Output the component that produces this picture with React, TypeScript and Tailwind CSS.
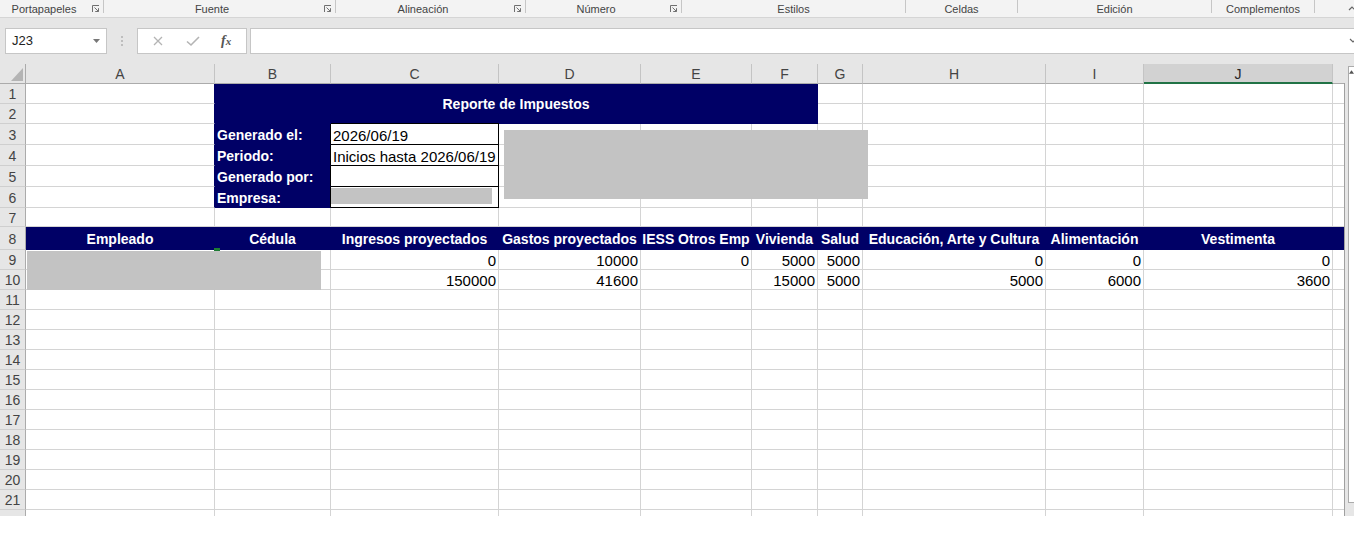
import React from "react";

const base = "border-r border-b border-[#d4d4d4] flex items-center pt-[2px] whitespace-nowrap leading-[17px]";
const kCell = "border-b border-[#d4d4d4]";

function Launcher() {
  return (
    <svg width="8" height="8" viewBox="0 0 8 8" className="shrink-0">
      <path d="M0.5 7V0.5H7" fill="none" stroke="#707070" strokeWidth="1" />
      <path d="M2.5 2.5L6.5 6.5M3.2 6.5H6.5V3.2" fill="none" stroke="#707070" strokeWidth="1" />
    </svg>
  );
}

function Group({ label, w, launcher }: { label: string; w: string; launcher?: boolean }) {
  return (
    <div className={`${w} h-full flex items-start shrink-0`}>
      <div className="flex-1 h-full flex items-center justify-center pt-[1px]">
        <span className={launcher ? "mr-[4px]" : ""}>{label}</span>
      </div>
      {launcher && (
        <div className="h-full flex items-center mr-[3px] pt-[1px]">
          <Launcher />
        </div>
      )}
      <div className="w-px h-[13px] bg-[#c6c6c6]" />
    </div>
  );
}

function RH({ n, hide }: { n: number; hide?: boolean }) {
  return (
    <div className="bg-[#e6e6e6] border-r border-b border-r-[#ababab] border-b-[#cfcfcf] flex items-center justify-center pt-[1px] text-[14px] text-[#444] leading-none">
      {hide ? "" : n}
    </div>
  );
}

function Blank({ last }: { last?: boolean }) {
  return <div className={last ? kCell : base} />;
}

function Blanks({ n }: { n: number }) {
  const arr = [];
  for (let i = 0; i < n; i++) arr.push(<Blank key={i} last={i === n - 1} />);
  return <>{arr}</>;
}

function Num({ v }: { v?: string }) {
  return <div className={`${base} justify-end pr-[2px]`}>{v}</div>;
}

const navyA = "border-r border-b border-b-[#d4d4d4] border-r-[#000066]";
const label = "bg-[#000066] border-r border-b border-r-black border-b-[#000066] flex items-center pt-[2px] pl-[2px] font-bold text-[14px] text-white whitespace-nowrap leading-[17px]";
const boxed = "border-r border-b border-black flex items-center pt-[2px] pl-[2px] whitespace-nowrap leading-[17px]";
const hdr = "bg-[#000066] border-r border-b border-[#000066] flex items-center justify-center pt-[2px] font-bold text-[14px] text-white whitespace-nowrap leading-[17px]";

export default function App() {
  const colHeaders = ["A", "B", "C", "D", "E", "F", "G", "H", "I"];
  const emptyRows = [11, 12, 13, 14, 15, 16, 17, 18, 19, 20, 21, 22];
  return (
    <div className="w-[1354px] h-[540px] overflow-hidden bg-white flex flex-col font-['Liberation_Sans',Arial,sans-serif] text-[15px] text-black">
      {/* Ribbon group labels */}
      <div className="h-[18px] shrink-0 bg-[#f3f3f3] border-b border-[#d5d5d5] flex text-[11px] text-[#444]">
        <Group label="Portapapeles" w="w-[104px]" launcher />
        <Group label="Fuente" w="w-[232px]" launcher />
        <Group label="Alineación" w="w-[190px]" launcher />
        <Group label="Número" w="w-[156px]" launcher />
        <Group label="Estilos" w="w-[224px]" />
        <Group label="Celdas" w="w-[112px]" />
        <Group label="Edición" w="w-[194px]" />
        <Group label="Complementos" w="w-[103px]" />
        <div className="flex-1 flex justify-end items-center pb-[2px]">
          <svg width="8" height="6" viewBox="0 0 8 6" className="mr-[-2px]">
            <path d="M1 5L4 2L7 5" fill="none" stroke="#666" strokeWidth="1.2" />
          </svg>
        </div>
      </div>

      {/* Formula bar */}
      <div className="h-[46px] shrink-0 bg-[#e6e6e6] flex items-start pt-[10px]">
        <div className="ml-[5px] w-[102px] h-[26px] bg-white border border-[#c6c6c6] flex items-center justify-between pl-[6px] pr-[6px] text-[13px] text-[#222]">
          <span>J23</span>
          <svg width="7" height="4" viewBox="0 0 7 4">
            <path d="M0 0H7L3.5 4Z" fill="#777" />
          </svg>
        </div>
        <svg width="4" height="12" viewBox="0 0 4 12" className="ml-[13px] mt-[7px]">
          <circle cx="2" cy="2" r="1" fill="#b0b0b0" />
          <circle cx="2" cy="6" r="1" fill="#b0b0b0" />
          <circle cx="2" cy="10" r="1" fill="#b0b0b0" />
        </svg>
        <div className="ml-[13px] w-[110px] h-[26px] bg-white border border-[#c6c6c6] flex items-center pl-[14px]">
          <svg width="12" height="12" viewBox="0 0 12 12">
            <path d="M2 2L10 10M10 2L2 10" stroke="#b4b4b4" strokeWidth="1.3" />
          </svg>
          <svg width="14" height="12" viewBox="0 0 14 12" className="ml-[22px]">
            <path d="M1 6.5L5 10L13 2" fill="none" stroke="#b4b4b4" strokeWidth="1.6" />
          </svg>
          <span className="ml-[21px] font-['Liberation_Serif',serif] italic font-bold text-[14px] text-[#555] leading-none">
            f<span className="text-[11px]">x</span>
          </span>
        </div>
        <div className="ml-[3px] flex-1 h-[26px] bg-white border border-r-0 border-[#c6c6c6] flex items-center justify-end">
          <svg width="8" height="6" viewBox="0 0 8 6" className="mr-[-3px]">
            <path d="M1 1L4 4L7 1" fill="none" stroke="#666" strokeWidth="1.2" />
          </svg>
        </div>
      </div>

      {/* Sheet */}
      <div className="h-[452px] shrink-0 flex">
        <div className="relative w-[1344px] h-[452px] overflow-hidden">
          <div className="grid grid-cols-[26px_189px_116px_168px_142px_111px_66px_45px_183px_98px_189px_11px] grid-rows-[20px_20px_20px_21px_21px_21px_21px_19px_23px_repeat(14,20px)]">
            {/* Column headers */}
            <div className="bg-[#e6e6e6] border-r border-b border-[#ababab] flex items-end justify-end pr-[2px] pb-[2px]">
              <svg width="12" height="13" viewBox="0 0 12 13">
                <path d="M12 0V13H0Z" fill="#b4b4b4" />
              </svg>
            </div>
            {colHeaders.map((c) => (
              <div
                key={c}
                className="bg-[#e6e6e6] border-r border-b border-r-[#c4c4c4] border-b-[#ababab] flex items-center justify-center pt-[1px] text-[14px] text-[#444] leading-none"
              >
                {c}
              </div>
            ))}
            <div className="bg-[#d2d2d2] border-r border-b-2 border-r-[#c4c4c4] border-b-[#217346] flex items-center justify-center pt-[2px] text-[14px] text-[#262626] leading-none">
              J
            </div>
            <div className="bg-[#e6e6e6] border-b border-b-[#ababab]" />

            {/* Row 1 */}
            <RH n={1} />
            <div className={navyA} />
            <div className="col-span-5 row-span-2 bg-[#000066] border-r border-b border-[#000066] flex items-center justify-center pt-[2px] font-bold text-[14px] text-white whitespace-nowrap">
              Reporte de Impuestos
            </div>
            <Blanks n={5} />

            {/* Row 2 */}
            <RH n={2} />
            <div className={navyA} />
            <Blanks n={5} />

            {/* Row 3 */}
            <RH n={3} />
            <div className={navyA} />
            <div className={label}>Generado el:</div>
            <div className={`${boxed} shadow-[0_-1px_0_#000]`}>2026/06/19</div>
            <Blanks n={8} />

            {/* Row 4 */}
            <RH n={4} />
            <div className={navyA} />
            <div className={label}>Periodo:</div>
            <div className={boxed}>Inicios hasta 2026/06/19</div>
            <Blanks n={8} />

            {/* Row 5 */}
            <RH n={5} />
            <div className={navyA} />
            <div className={label}>Generado por:</div>
            <div className={boxed} />
            <Blanks n={8} />

            {/* Row 6 */}
            <RH n={6} />
            <div className={navyA} />
            <div className={label}>Empresa:</div>
            <div className="border-r border-b border-black flex items-start">
              <div className="mt-[1px] w-[161px] h-[16px] bg-[#c3c3c3]" />
            </div>
            <Blanks n={8} />

            {/* Row 7 */}
            <RH n={7} />
            <Blanks n={11} />

            {/* Row 8 */}
            <RH n={8} />
            <div className={hdr}>Empleado</div>
            <div className={hdr}>Cédula</div>
            <div className={hdr}>Ingresos proyectados</div>
            <div className={hdr}>Gastos proyectados</div>
            <div className={hdr}>IESS Otros Emp</div>
            <div className={hdr}>Vivienda</div>
            <div className={hdr}>Salud</div>
            <div className={hdr}>Educación, Arte y Cultura</div>
            <div className={hdr}>Alimentación</div>
            <div className={hdr}>Vestimenta</div>
            <div className="bg-[#000066] border-b border-[#000066]" />

            {/* Row 9 */}
            <RH n={9} />
            <Blank />
            <Blank />
            <Num v="0" />
            <Num v="10000" />
            <Num v="0" />
            <Num v="5000" />
            <Num v="5000" />
            <Num v="0" />
            <Num v="0" />
            <Num v="0" />
            <Blank last />

            {/* Row 10 */}
            <RH n={10} />
            <Blank />
            <Blank />
            <Num v="150000" />
            <Num v="41600" />
            <Num />
            <Num v="15000" />
            <Num v="5000" />
            <Num v="5000" />
            <Num v="6000" />
            <Num v="3600" />
            <Blank last />

            {emptyRows.map((r) => (
              <React.Fragment key={r}>
                <RH n={r} hide={r === 22} />
                <Blanks n={11} />
              </React.Fragment>
            ))}
          </div>

          {/* Overlays */}
          <div className="absolute left-[504px] top-[66px] w-[364px] h-[69px] bg-[#c3c3c3]" />
          <div className="absolute left-[214px] top-[184px] w-[6px] h-[3px] bg-[#1e7b34]" />
          <div className="absolute left-[27px] top-[187px] w-[294px] h-[39px] bg-[#c3c3c3]" />
        </div>

        {/* Vertical scrollbar */}
        <div className="w-[10px] h-[452px] bg-[#e6e6e6] flex">
          <div className="w-px mt-[19px] bg-[#a0a0a0]" />
          <div className="ml-[3px] mt-[2px] w-[6px] h-[437px] bg-white border-l border-t border-b border-[#ababab] flex justify-center pt-[3px]">
            <svg width="6" height="4" viewBox="0 0 6 4">
              <path d="M0 4L3 0L6 4Z" fill="#555" />
            </svg>
          </div>
        </div>
      </div>
    </div>
  );
}
